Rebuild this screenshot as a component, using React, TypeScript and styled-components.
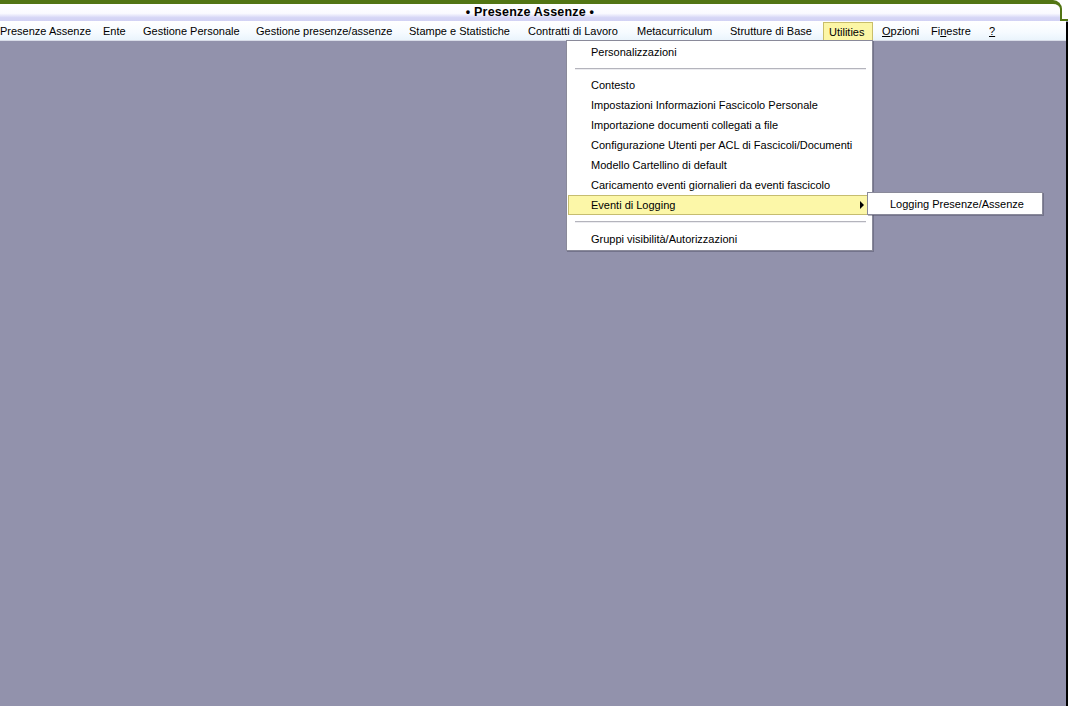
import React from "react";
import styled, { createGlobalStyle } from "styled-components";

const Global = createGlobalStyle`
  html, body { margin: 0; padding: 0; overflow: hidden; }
  body { background: #9292ac; font-family: Tahoma, "Liberation Sans", Arial, sans-serif; }
  #root { height: 706px; }
`;

const Window = styled.div`
  position: relative;
  width: 1068px;
  height: 706px;
  background: #9292ac;
  display: flex;
  flex-direction: column;
  overflow: hidden;
  &::after {
    content: "";
    position: absolute;
    right: 0;
    top: 22px;
    bottom: 0;
    width: 2px;
    background: #000;
  }
`;

const TitleRow = styled.div`
  position: relative;
  height: 21px;
  display: flex;
  background: #fff;
  &::after {
    content: "";
    position: absolute;
    right: 0;
    top: 19px;
    width: 7px;
    height: 2px;
    background: #527514;
  }
`;

const TitleBar = styled.div`
  flex: 1;
  margin-right: 6px;
  box-sizing: border-box;
  height: 21px;
  border-top: 4px solid #527514;
  border-right: 2px solid #527514;
  border-top-right-radius: 9px;
  background: linear-gradient(to bottom, #ffffff 0%, #fafaff 55%, #d6d6f6 80%, #d2d2f4 100%);
  display: flex;
  align-items: center;
  justify-content: center;
  padding-bottom: 2px;
`;

const Title = styled.span`
  font-family: Tahoma, "Liberation Sans", Arial, sans-serif;
  font-weight: bold;
  font-size: 12.5px;
  letter-spacing: 0.2px;
  color: #000;
  margin-left: 0px;
`;

const MenuBar = styled.div`
  height: 20px;
  margin-right: 2px;
  display: flex;
  align-items: stretch;
  background: linear-gradient(to bottom, #ffffff 0%, #f6fbff 60%, #eaf4fc 100%);
  border-bottom: 1px solid #d8dce8;
  box-sizing: border-box;
  position: relative;
`;

const MenuItem = styled.div<{ $active?: boolean; $w?: number; $pl?: number; $ml?: number }>`
  position: relative;
  display: flex;
  align-items: center;
  flex: none;
  width: ${(p) => (p.$w ? `${p.$w}px` : "auto")};
  padding-left: ${(p) => p.$pl ?? 7}px;
  margin-left: ${(p) => p.$ml ?? 0}px;
  margin-top: ${(p) => (p.$active ? "1px" : "0")};
  font-size: 11px;
  color: #000;
  white-space: nowrap;
  background: ${(p) => (p.$active ? "#fcf6a6" : "transparent")};
  border: ${(p) => (p.$active ? "1px solid #c9be6a" : "none")};
  border-bottom: none;
  box-sizing: border-box;
`;

const U = styled.span`
  text-decoration: underline;
`;

const Dropdown = styled.div`
  position: absolute;
  left: 566px;
  top: 40px;
  width: 307px;
  box-sizing: border-box;
  background: #fff;
  border: 1px solid #8a8a9a;
  padding: 1px 0 1px;
  display: flex;
  flex-direction: column;
  box-shadow: 1px 1px 0 rgba(70, 70, 90, 0.4);
  z-index: 5;
`;

const DItem = styled.div<{ $hover?: boolean }>`
  position: relative;
  height: 20px;
  margin: 0 1px;
  padding-left: 22px;
  display: flex;
  align-items: center;
  font-size: 11px;
  color: #000;
  white-space: nowrap;
  box-sizing: border-box;
  background: ${(p) => (p.$hover ? "#fcf7a8" : "transparent")};
  border: 1px solid ${(p) => (p.$hover ? "#c6bd70" : "transparent")};
`;

const Sep = styled.div<{ $h: number }>`
  height: ${(p) => p.$h}px;
  display: flex;
  align-items: center;
  padding: 0 6px 0 8px;
  &::before {
    content: "";
    flex: 1;
    height: 1px;
    background: #b4b4bc;
    border-bottom: 1px solid #ececf0;
  }
`;

const Arrow = styled.span`
  position: absolute;
  right: 6px;
  top: 5px;
  width: 0;
  height: 0;
  border-top: 4px solid transparent;
  border-bottom: 4px solid transparent;
  border-left: 4px solid #000;
`;

const SubMenu = styled.div`
  position: absolute;
  left: 298px;
  top: -4px;
  width: 176px;
  height: 23px;
  box-sizing: border-box;
  background: #fff;
  border: 1px solid #8a8a9a;
  display: flex;
  align-items: center;
  padding-left: 22px;
  font-size: 11px;
  color: #000;
  box-shadow: 1px 1px 0 rgba(70, 70, 90, 0.4);
`;

const Body = styled.div`
  flex: 1;
  background: #9292ac;
`;

const menus: { label: string; w: number }[] = [
  { label: "Presenze Assenze", w: 103 },
  { label: "Ente", w: 40 },
  { label: "Gestione Personale", w: 113 },
  { label: "Gestione presenze/assenze", w: 153 },
  { label: "Stampe e Statistiche", w: 119 },
  { label: "Contratti di Lavoro", w: 109 },
  { label: "Metacurriculum", w: 93 },
  { label: "Strutture di Base", w: 100 },
];

export default function App() {
  return (
    <>
      <Global />
      <Window>
        <TitleRow>
          <TitleBar>
            <Title>• Presenze Assenze •</Title>
          </TitleBar>
        </TitleRow>
        <MenuBar>
          {menus.map((m, i) => (
            <MenuItem key={m.label} $w={m.w} $ml={i === 0 ? -7 : 0}>
              {m.label}
            </MenuItem>
          ))}
          <MenuItem $active $w={50} $pl={5}>
            Utilities
          </MenuItem>
          <MenuItem $w={51} $pl={9}>
            <U>O</U>pzioni
          </MenuItem>
          <MenuItem $w={58}>
            Fi<U>n</U>estre
          </MenuItem>
          <MenuItem>
            <U>?</U>
          </MenuItem>
        </MenuBar>
        <Body />
        <Dropdown>
          <DItem>Personalizzazioni</DItem>
          <Sep $h={13} />
          <DItem>Contesto</DItem>
          <DItem>Impostazioni Informazioni Fascicolo Personale</DItem>
          <DItem>Importazione documenti collegati a file</DItem>
          <DItem>Configurazione Utenti per ACL di Fascicoli/Documenti</DItem>
          <DItem>Modello Cartellino di default</DItem>
          <DItem>Caricamento eventi giornalieri da eventi fascicolo</DItem>
          <DItem $hover>
            Eventi di Logging
            <Arrow />
            <SubMenu>Logging Presenze/Assenze</SubMenu>
          </DItem>
          <Sep $h={14} />
          <DItem>Gruppi visibilità/Autorizzazioni</DItem>
        </Dropdown>
      </Window>
    </>
  );
}
